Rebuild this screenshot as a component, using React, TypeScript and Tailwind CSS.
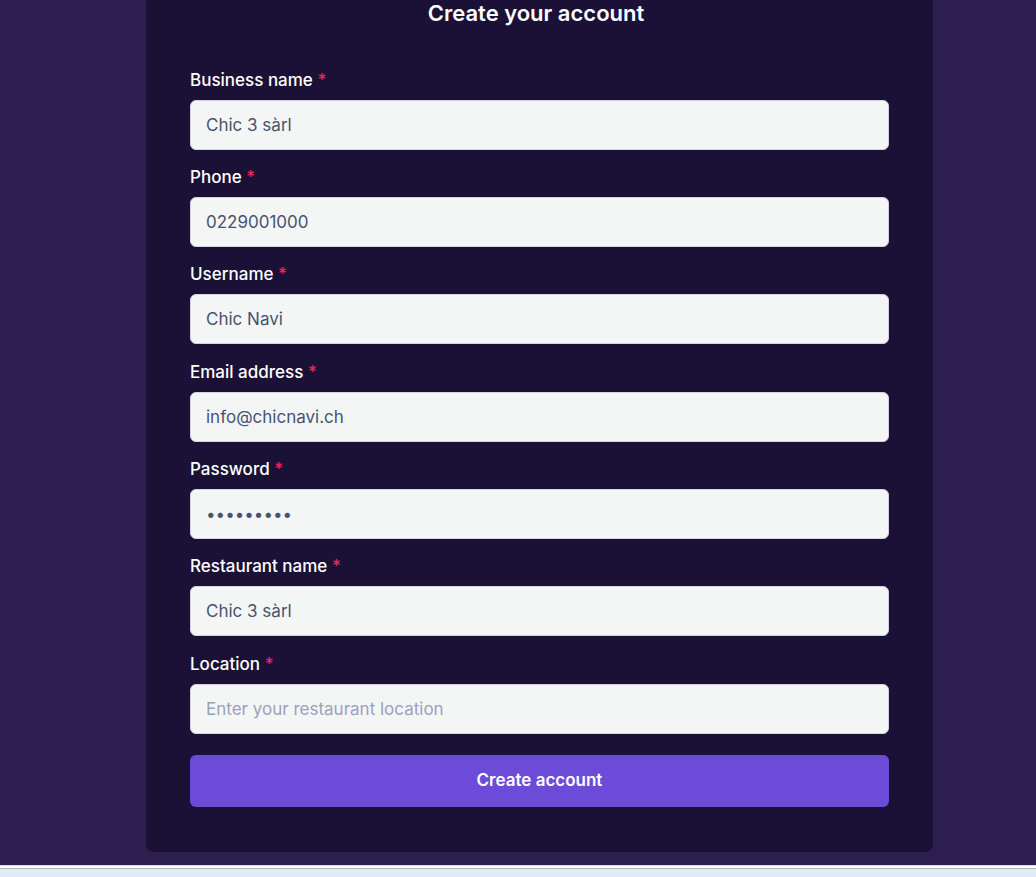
import React from "react";

type Field = {
  label: string;
  value?: string;
  placeholder?: string;
  type?: string;
};

const fields: Field[] = [
  { label: "Business name", value: "Chic 3 sàrl" },
  { label: "Phone", value: "0229001000" },
  { label: "Username", value: "Chic Navi" },
  { label: "Email address", value: "info@chicnavi.ch", type: "email" },
  { label: "Password", value: "secret123", type: "password" },
  { label: "Restaurant name", value: "Chic 3 sàrl" },
  { label: "Location", placeholder: "Enter your restaurant location" },
];

export default function App() {
  return (
    <div
      className="flex h-[877px] flex-col overflow-hidden bg-[#2c1f4f]"
      style={{ fontFamily: "Inter, 'Noto Sans', sans-serif" }}
    >
      <div className="flex min-h-0 flex-1 overflow-hidden pl-[146px]">
        {/* card is scrolled: its top sits above the window */}
        <div className="mb-[13px] w-[787px] shrink-0 self-end rounded-lg bg-[#1b1136] px-[44px] pt-[40px] pb-[45px]">
          <h1 className="pr-[7px] text-center text-[22px] leading-7 font-semibold text-white">
            Create your account
          </h1>

          <form className="mt-[41px] flex flex-col gap-[15.33px]">
            {fields.map((f) => (
              <div key={f.label} className="flex flex-col">
                <label className="mb-2 text-[17px] leading-6 font-medium text-white">
                  {f.label} <span className="text-[#f0245c]">*</span>
                </label>
                <input
                  type={f.type ?? "text"}
                  defaultValue={f.value}
                  placeholder={f.placeholder}
                  className="h-[50px] rounded-md border border-[#d3d3e0] bg-[#f4f6f6] px-[15px] text-[17px] text-[#47536f] placeholder:text-[#9aa1bb] focus:outline-none"
                />
              </div>
            ))}

            <button
              type="button"
              className="mt-[6px] h-[52px] rounded-md bg-[#6c4bd9] text-[17px] font-semibold text-white"
            >
              Create account
            </button>
          </form>
        </div>
      </div>

      {/* window edge below the page */}
      <div className="h-[12px] shrink-0 border-t border-[#dcd8e6] bg-[#e0ebf3]">
        <div className="h-[2px] bg-white" />
        <div className="h-px bg-[#b4b4bc]" />
      </div>
    </div>
  );
}
